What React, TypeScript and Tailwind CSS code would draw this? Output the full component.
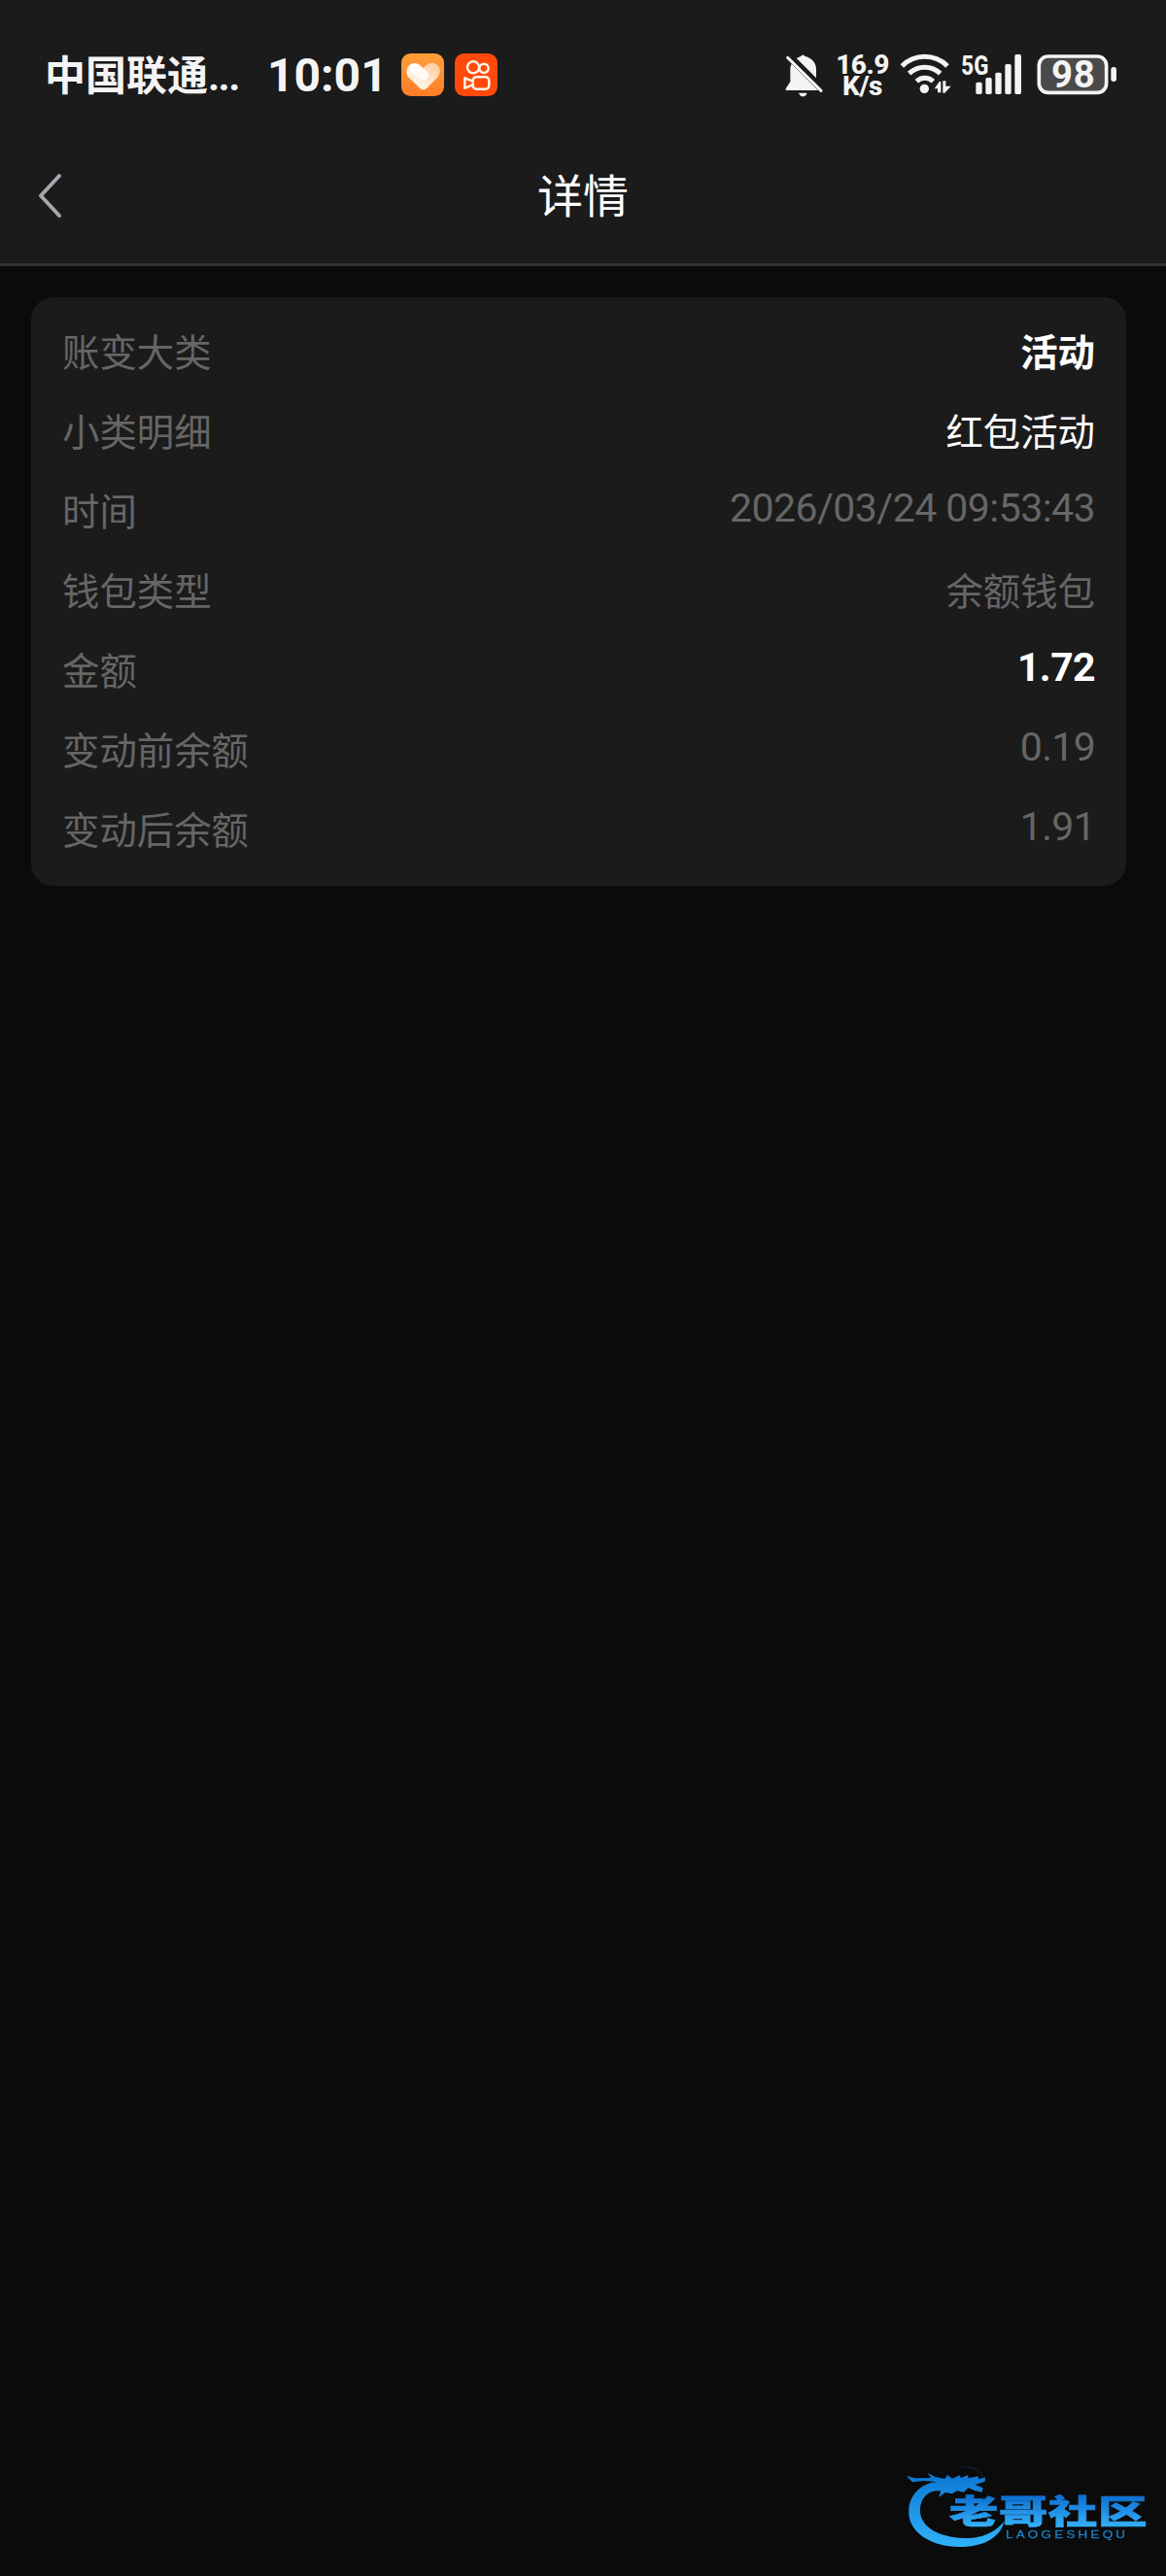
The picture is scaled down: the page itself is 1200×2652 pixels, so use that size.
import React from 'react';

const cjk = "font-['Noto_Sans_CJK_SC',sans-serif]";

type Row = { label: string; value: string; kind: 'cjk' | 'num'; tone: string };

const rows: Row[] = [
  { label: '账变大类', value: '活动', kind: 'cjk', tone: 'text-white font-bold' },
  { label: '小类明细', value: '红包活动', kind: 'cjk', tone: 'text-white' },
  { label: '时间', value: '2026/03/24 09:53:43', kind: 'num', tone: 'text-[#666666] tracking-[-0.55px]' },
  { label: '钱包类型', value: '余额钱包', kind: 'cjk', tone: 'text-[#666666]' },
  { label: '金额', value: '1.72', kind: 'num', tone: 'text-white font-bold tracking-[-0.6px]' },
  { label: '变动前余额', value: '0.19', kind: 'num', tone: 'text-[#666666] tracking-[-0.7px]' },
  { label: '变动后余额', value: '1.91', kind: 'num', tone: 'text-[#666666] tracking-[-0.7px]' },
];

function HeartApp() {
  return (
    <svg className="ml-[17px] h-[45px] w-[45px]" viewBox="69 45 135 135">
      <defs>
        <linearGradient id="ha" x1="0" y1="0" x2="0" y2="1">
          <stop offset="0" stopColor="#ff9f38" />
          <stop offset="1" stopColor="#ff7d28" />
        </linearGradient>
        <linearGradient id="hb" x1="0" y1="1" x2="1" y2="0">
          <stop offset="0.3" stopColor="#fff3e4" />
          <stop offset="1" stopColor="#ffc795" />
        </linearGradient>
      </defs>
      <rect x="69" y="45" width="132" height="132" rx="29" fill="url(#ha)" />
      <path
        d="M137 157C132 157 128 154 124 150L93 120C83 109 83 92 92 83C102 73 118 72 128 81L137 90L146 81C156 72 172 72 181 82C191 92 190 109 180 120L150 150C146 154 142 157 137 157Z"
        fill="url(#hb)"
      />
      <path d="M108 91L138 112" stroke="#fff" strokeWidth="31" strokeLinecap="round" opacity="0.85" />
    </svg>
  );
}

function VideoApp() {
  return (
    <svg className="ml-[10px] h-[45px] w-[45px]" viewBox="234 45 135 135">
      <rect x="234" y="45" width="132" height="132" rx="29" fill="#ff4a0b" />
      <g fill="none" stroke="#fff3e6" strokeWidth="7.5" strokeLinejoin="round">
        <circle cx="291" cy="88" r="18" />
        <circle cx="324" cy="91" r="14" />
        <rect x="290" y="118" width="50" height="37" rx="11" />
        <path d="M290 131L265 121V152L290 142" />
      </g>
    </svg>
  );
}

function BellOff() {
  return (
    <svg className="h-[45px] w-[40px]" viewBox="50 45 120 135" fill="#f4f4f4">
      <path d="M98 54Q105 45 112 54C133 60 146 74 146 94V126Q146 133 155 143V159H52V154L66 132V94C66 76 80 60 98 54Z" />
      <path d="M92 167H118Q114 178 105 178Q96 178 92 167Z" />
      <path d="M60 51L166 157" stroke="#1b1b1b" strokeWidth="23" />
      <path d="M58 58L161 160" stroke="#f4f4f4" strokeWidth="9" strokeLinecap="round" />
    </svg>
  );
}

function Wifi() {
  return (
    <svg className="ml-[12px] h-[45px] w-[53px]" viewBox="408 45 159 135">
      <g fill="none" stroke="#f4f4f4" strokeWidth="15">
        <path d="M415 84C453 45 517 45 555 84" />
        <path d="M437 107C464 81 506 81 533 107" />
        <path d="M460 131C474 117 497 117 511 131" />
      </g>
      <g fill="#f4f4f4">
        <circle cx="484" cy="154" r="14" />
        <path d="M535 132V166H525V154H515L530 132Z" />
        <path d="M541 130H550V146H566L547 167H541Z" />
      </g>
    </svg>
  );
}

function Signal() {
  return (
    <svg className="ml-[10px] h-[45px] w-[64px] overflow-visible" viewBox="26 45 192 135" fill="#f4f4f4">
      <text x="27" y="110" fontFamily="Roboto, sans-serif" fontWeight="800" fontSize="81" textLength="84" lengthAdjust="spacingAndGlyphs">
        5G
      </text>
      <rect x="72" y="134" width="19" height="37" rx="5" />
      <rect x="102" y="120" width="19" height="51" rx="5" />
      <rect x="132" y="104" width="19" height="67" rx="5" />
      <rect x="162" y="78" width="19" height="93" rx="5" />
      <rect x="192" y="48" width="20" height="123" rx="5" />
    </svg>
  );
}

function Battery() {
  return (
    <svg className="ml-[14px] h-[45px] w-[83px] overflow-visible" viewBox="260 45 249 135">
      <rect x="267" y="54" width="208" height="112" rx="28" fill="#4a4a4a" stroke="#f4f4f4" strokeWidth="11" />
      <rect x="489" y="87" width="17" height="45" rx="8" fill="#f4f4f4" />
      <text x="305" y="149" fill="#f4f4f4" fontFamily="Roboto, sans-serif" fontWeight="700" fontSize="115" textLength="134">
        98
      </text>
    </svg>
  );
}

function Watermark() {
  return (
    <svg className="h-[90px] w-[250px] blur-[0.5px]" viewBox="95 45 750 270">
      <defs>
        <linearGradient id="wm" x1="0" y1="70" x2="0" y2="305" gradientUnits="userSpaceOnUse">
          <stop offset="0" stopColor="#0b74d0" />
          <stop offset="1" stopColor="#30b2fb" />
        </linearGradient>
        <linearGradient id="wt" x1="0" y1="-86" x2="0" y2="10" gradientUnits="userSpaceOnUse">
          <stop offset="0" stopColor="#0d6fd0" />
          <stop offset="1" stopColor="#35b2fa" />
        </linearGradient>
      </defs>
      <g fill="url(#wm)">
        <path d="M180 106C128 120 102 158 105 205C109 262 172 306 262 306C332 306 388 280 400 226C374 261 328 281 274 279C198 276 144 246 140 198C137 158 166 127 203 134Z" />
        <path d="M97 86L124 94L174 93L162 77L187 90L216 96L224 83L239 95L262 85L266 93L287 84L289 94L318 88L322 97L341 91L340 104L310 114L334 124L330 137L308 132L289 124L274 137L254 133L238 142L218 138L197 152L204 134L174 118L187 105L151 102L116 106Z" />
        <path d="M190 66Q205 82 225 84Q207 76 190 66ZM255 58C300 52 338 68 337 96C328 72 300 60 255 58Z" opacity="0.18" />
      </g>
      <g transform="translate(229 235) scale(1.46 1)">
        <text fill="url(#wt)" stroke="url(#wt)" strokeWidth="2" fontFamily="'Noto Sans CJK SC', sans-serif" fontWeight="900" fontSize="104" textLength="419">
          老哥社区
        </text>
      </g>
      <g transform="translate(404 280) scale(1.3 1)">
        <text fill="#1c80c5" stroke="#1c80c5" strokeWidth="0.8" fontFamily="'Liberation Sans', sans-serif" fontSize="31" textLength="284" lengthAdjust="spacing">
          LAOGESHEQU
        </text>
      </g>
    </svg>
  );
}

export default function App() {
  return (
    <div className={`flex h-[2652px] w-[1200px] flex-col bg-[#0b0b0b] ${cjk}`}>
      <header className="flex h-[274px] flex-col border-b-[3px] border-[#323232] bg-[#1b1b1b]">
        <div className="flex h-[154px] shrink-0 items-start justify-between pt-[55px] pr-[50px] pl-[46px] text-[#f4f4f4]">
          <div className="flex h-[45px] items-center">
            <span className="w-[198px] pb-[3px] text-[42px] leading-[45px] font-bold whitespace-nowrap">
              中国联通<span className="font-['Roboto',sans-serif] tracking-[-1.6px]">...</span>
            </span>
            <span className="ml-[31px] w-[121px] font-['Roboto',sans-serif] text-[48px] leading-[45px] font-bold whitespace-nowrap">10:01</span>
            <HeartApp />
            <VideoApp />
          </div>
          <div className="flex h-[45px] items-center">
            <BellOff />
            <div className="ml-[13px] flex w-[53px] flex-col items-center font-['Roboto',sans-serif] text-[28px] leading-[22px] font-extrabold tracking-[-0.5px] whitespace-nowrap">
              <span>16.9</span>
              <span>K/s</span>
            </div>
            <Wifi />
            <Signal />
            <Battery />
          </div>
        </div>
        <div className="grid h-[93px] grid-cols-[120px_1fr_120px] items-center">
          <button className="flex pl-[38px]" aria-label="返回">
            <svg className="h-[54px] w-[30px]" viewBox="0 0 30 54" fill="none">
              <path d="M23 6.5L4 27L23 47.5" transform="translate(0 .5)" stroke="#a5a6ae" strokeWidth="4" strokeLinecap="round" strokeLinejoin="round" />
            </svg>
          </button>
          <h1 className="pb-[4px] text-center text-[47px] leading-[60px] text-white">详情</h1>
        </div>
      </header>

      <main className="grow pt-[32px] pr-[41px] pl-[32px]">
        <section className="flex h-[606px] flex-col rounded-[23px] bg-[#1b1b1b] px-[32px] pt-[13px]">
          {rows.map((r) => (
            <div key={r.label} className="flex h-[82px] items-start justify-between leading-[82px] whitespace-nowrap">
              <span className="text-[38.4px] text-[#666666]">{r.label}</span>
              {r.kind === 'cjk' ? (
                <span className={`text-[38.4px] ${r.tone}`}>{r.value}</span>
              ) : (
                <span className={`font-['Roboto',sans-serif] text-[41px] leading-[81px] ${r.tone}`}>{r.value}</span>
              )}
            </div>
          ))}
        </section>
      </main>

      <footer className="flex justify-end pr-[18px] pb-[27px]">
        <Watermark />
      </footer>
    </div>
  );
}
